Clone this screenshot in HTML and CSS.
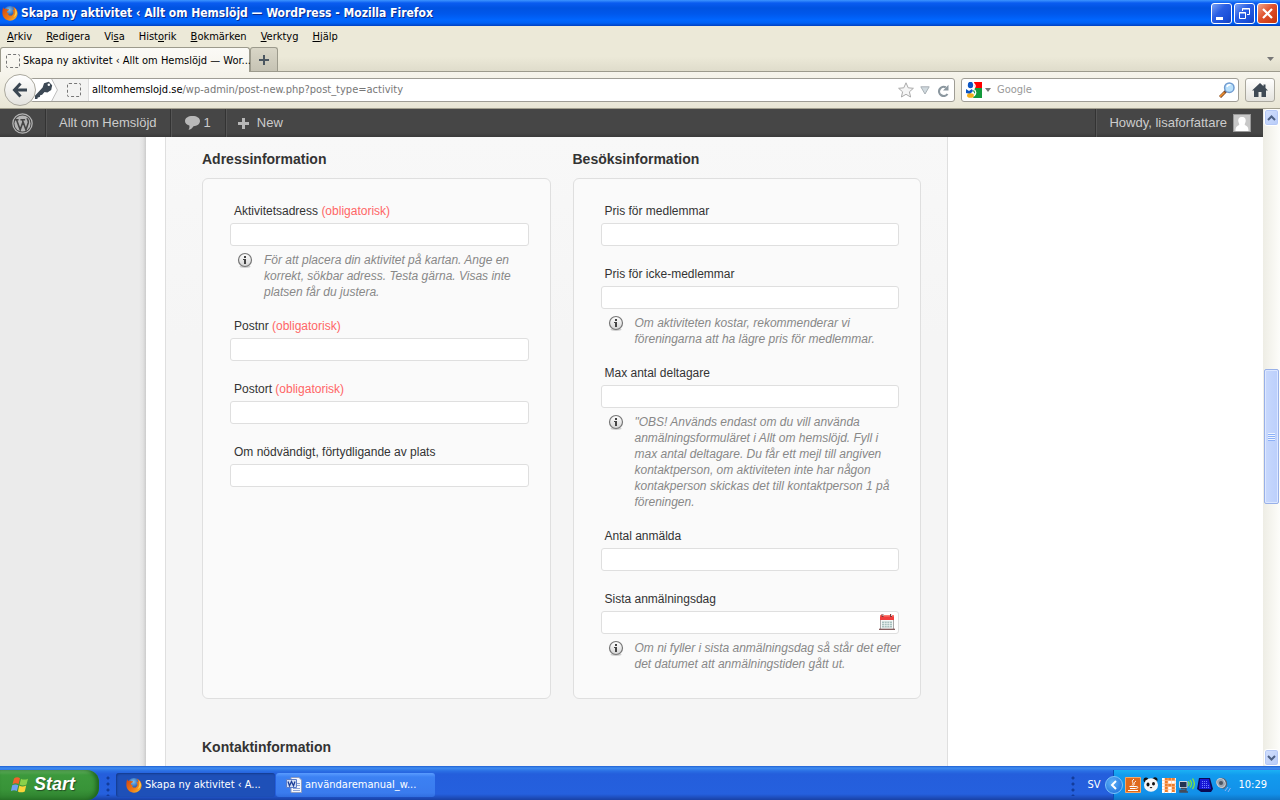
FILE: index.html
```html
<!DOCTYPE html>
<html lang="sv">
<head>
<meta charset="utf-8">
<title>Skapa ny aktivitet ‹ Allt om Hemslöjd — WordPress</title>
<link rel="stylesheet" href="styles.css">
</head>
<body>
<svg class="defs" aria-hidden="true">
  <defs>
    <radialGradient id="globe" cx=".45" cy=".3" r=".7"><stop offset="0" stop-color="#7cc4f0"/><stop offset=".6" stop-color="#2a5fb4"/><stop offset="1" stop-color="#162a6a"/></radialGradient>
    <linearGradient id="fox" x1="0" y1="0" x2="1" y2="1"><stop offset="0" stop-color="#d2420c"/><stop offset=".6" stop-color="#ee7a17"/><stop offset="1" stop-color="#fdc52f"/></linearGradient>
    <linearGradient id="infobg" x1="0" y1="0" x2="0" y2="1"><stop offset="0" stop-color="#fff"/><stop offset="1" stop-color="#d4d4d4"/></linearGradient>
    <symbol id="firefox" viewBox="0 0 16 16">
      <circle cx="8" cy="7.500" r="6.600" fill="url(#globe)"/>
      <path d="M1.200 2.200 2 4 3.600 3.400 5.200 4.200 7.200 4.300 6.300 5.600 4.900 6.200 5 7.700 6.800 8 6 9.200 7.200 10.600 9.800 10.400 11.400 8.600 11.300 6.400 10.200 4.400 12 5.300 11.900 3.200 10.600 1.400C13.800 2.600 15.800 5.400 15.600 8.800 15.200 13 12 15.700 8 15.700 3.800 15.700.6 12.600.4 8.600.3 6.200.6 3.800 1.200 2.200Z" fill="url(#fox)"/>
      <path d="M12.400 3.200C14 5.500 13.600 10 11.200 12 13.600 11.600 15 9.600 15 7.800 14.800 5.800 13.800 4.200 12.400 3.200Z" fill="#fcd04a"/>
    </symbol>
    <symbol id="info" viewBox="0 0 16 18">
      <ellipse cx="8" cy="14.600" rx="5.500" ry="1.400" fill="#bbb" opacity=".7"/>
      <circle cx="8" cy="8" r="6.500" fill="url(#infobg)" stroke="#777" stroke-width="1.200"/>
      <path d="M7 4h2v2H7zM6 7h3v5H7V8H6z" fill="#444"/>
    </symbol>
  </defs>
</svg>

<header class="titlebar">
  <svg class="icon16" aria-hidden="true"><use href="#firefox"/></svg>
  <h1 class="titlebar-text">Skapa ny aktivitet ‹ Allt om Hemslöjd — WordPress - Mozilla Firefox</h1>
  <div class="window-buttons">
    <button class="winbtn" aria-label="Minimera"><svg viewBox="0 0 19 19"><path d="M4 13h7v3H4z" fill="#fff"/></svg></button>
    <button class="winbtn" aria-label="Återställ"><svg viewBox="0 0 19 19" fill="none" stroke="#fff"><path d="M7.500 7V4.500h7v6H12M7 5h8"/><path d="M4.500 8.500h6v6h-6zM4 9h7"/></svg></button>
    <button class="winbtn winbtn-close" aria-label="Stäng"><svg viewBox="0 0 19 19"><path d="m5 5 9 9m0-9-9 9" stroke="#fff" stroke-width="2.200"/></svg></button>
  </div>
</header>

<nav class="menubar" aria-label="Meny">
  <button><u>A</u>rkiv</button><button><u>R</u>edigera</button><button>Vi<u>s</u>a</button><button>Hist<u>o</u>rik</button><button><u>B</u>okmärken</button><button><u>V</u>erktyg</button><button><u>H</u>jälp</button>
</nav>

<div class="tabstrip">
  <button class="tab"><span class="blank-page"></span><span>Skapa ny aktivitet ‹ Allt om Hemslöjd — Wor...</span></button>
  <button class="newtab" aria-label="Ny flik"><svg viewBox="0 0 12 12"><path d="M6 1v10M1 6h10" stroke="#4b5660" stroke-width="2"/></svg></button>
  <button class="tablist" aria-label="Alla flikar"><svg viewBox="0 0 7 4"><path d="M0 0h7L3.500 4z" fill="#777"/></svg></button>
</div>

<div class="toolbar">
  <button class="back" aria-label="Bakåt"><svg viewBox="0 0 18 18"><path d="M9.500 2.500 3.500 9l6 6.500M4 9h12" fill="none" stroke="#3a4652" stroke-width="3"/></svg></button>
  <div class="urlbar">
    <div class="identity">
      <svg class="key" viewBox="0 0 28 23"><path d="M0 0h21l6 11.500L21 23H0z" fill="#fff"/><path d="m21 0 6 11.500L21 23" fill="none" stroke="#bbb"/><path d="M13 4.500 18 3l3.500 3.500-1 5-4 2.500-3-.5-2.500 3-2 .4-.4 2-2.200.4-.4 1.700H3.500v-3.500L11.500 9z" fill="#3d4955"/><circle cx="18" cy="6" r="1.300" fill="#fff"/></svg>
      <span class="blank-page"></span>
    </div>
    <div class="address" role="textbox" aria-label="Adress" tabindex="0"><b>alltomhemslojd.se</b>/wp-admin/post-new.php?post_type=activity</div>
    <svg class="star" viewBox="0 0 16 16"><path d="m8 .8 2.200 5 5.200.5-4 3.500 1.200 5.200L8 12.300 3.400 15l1.200-5.200-4-3.500 5.200-.5z" fill="#f5f5f5" stroke="#aaa"/></svg>
    <svg class="drop" viewBox="0 0 10 9"><path d="M.8.8h8.400L5 8z" fill="#d0d9de" stroke="#a8b0b5"/></svg>
    <svg class="reload" viewBox="0 0 12 13"><path d="M10.500 10A4.600 4.600 0 1 1 8.800 3.300" fill="none" stroke="#8b979f" stroke-width="2.200"/><path d="M11.500.8v5.700H6z" fill="#8b979f"/></svg>
  </div>
  <div class="searchbar">
    <svg class="icon16" viewBox="0 0 16 16"><path d="M0 0h16v16H0z" fill="#fff"/><path d="M8 0h8v6H9z" fill="#f00"/><path d="M9 6h7v10H7l2-4-2-3z" fill="#149a3c"/><ellipse cx="4.500" cy="3" rx="2.700" ry="3.200" fill="#0b55c4"/><path d="m0 7 3 2 3-2 1 2-3 3-4-1z" fill="#0b55c4"/><ellipse cx="4.500" cy="13.500" rx="3.500" ry="2.300" fill="#f4ae1c"/><path d="M7 1c3 2 3 4 0 6 4 2 3 5 1 7" fill="none" stroke="#fff" stroke-width="1.300"/></svg>
    <svg class="caret" viewBox="0 0 6 4"><path d="M0 0h6L3 4z" fill="#777"/></svg>
    <input class="search" type="text" placeholder="Google" aria-label="Sök">
    <svg class="icon16" viewBox="0 0 16 16"><path d="m7 9-6 6" stroke="#7a4a2a" stroke-width="3"/><path d="m5.500 10.500-4.500 4.200" stroke="#f09030" stroke-width="1.700"/><circle cx="10.300" cy="5.700" r="4.700" fill="#b9e0fb" stroke="#6f9bd0" stroke-width="1.500"/><path d="M8 5c.5-2 2-2.400 3.500-2.200" stroke="#fff" stroke-width="1.500" fill="none"/></svg>
  </div>
  <button class="home" aria-label="Startsida"><svg viewBox="0 0 16 14"><path d="M8 0 0 7.500h2V14h4.500V9h3v5H14V7.500h2l-2.500-2.400V1.500h-2v1.700z" fill="#3f4a55"/></svg></button>
</div>

<div class="viewport">
  <div class="page">
    <nav class="adminbar" aria-label="Verktygsfält">
      <a class="ab-item ab-logo" href="#" aria-label="WordPress"><svg viewBox="0 0 20 20"><circle cx="10" cy="10" r="9.200" fill="none" stroke="#b4b4b4" stroke-width="1.200"/><circle cx="10" cy="10" r="7.700" fill="#b4b4b4"/><path d="M2.500 6.500h3.800M8 6.500h4.500M4.300 6.500 7.800 16l2.600-7.500M9.800 6.500 13.300 16l2.200-6.800c.5-2-.9-2.900-1.100-4.200" fill="none" stroke="#464646" stroke-width="1.500"/></svg></a>
      <a class="ab-item ab-site" href="#">Allt om Hemslöjd</a>
      <a class="ab-item ab-comments" href="#"><svg viewBox="0 0 15 14"><path d="M7.500 0C12 0 15 2 15 5s-3 5.200-6.500 5.200C7.500 12 5.500 13.700 3.500 13.700 4.500 12.500 4.600 11 4.300 9.600 1.500 8.700 0 7 0 5c0-3 3-5 7.500-5z" fill="#b8b8b8"/></svg>1</a>
      <a class="ab-item ab-new" href="#"><svg viewBox="0 0 11 11"><path d="M5.500 0v11M0 5.500h11" stroke="#b8b8b8" stroke-width="3"/></svg>New</a>
      <a class="ab-item ab-user" href="#">Howdy, lisaforfattare<svg viewBox="0 0 18 18"><path d="M0 0h18v18H0z" fill="#999"/><path d="M1 1h16v16H1z" fill="#c8c8c8"/><path d="M9 3c3 0 4 2 3.700 4.300-.2 1.600-1 2.200-1 3.500 1.300 1.200 3.800 1.200 3.800 6.200h-13c0-5 2.500-5 3.800-6.200 0-1.300-.8-1.900-1-3.500C5 5 6 3 9 3z" fill="#fff"/></svg></a>
    </nav>
    <div class="columns">
      <div class="adminmenu"></div>
      <main class="panel">
        <form class="sections">
          <section class="section">
            <h2>Adressinformation</h2>
            <div class="card">
              <div class="field"><label for="adress">Aktivitetsadress <em>(obligatorisk)</em></label><input id="adress" type="text">
                <p class="help"><svg aria-hidden="true"><use href="#info"/></svg><span>För att placera din aktivitet på kartan. Ange en<br>korrekt, sökbar adress. Testa gärna. Visas inte<br>platsen får du justera.</span></p></div>
              <div class="field"><label for="postnr">Postnr <em>(obligatorisk)</em></label><input id="postnr" type="text"></div>
              <div class="field"><label for="postort">Postort <em>(obligatorisk)</em></label><input id="postort" type="text"></div>
              <div class="field"><label for="plats">Om nödvändigt, förtydligande av plats</label><input id="plats" type="text"></div>
            </div>
          </section>
          <section class="section">
            <h2>Besöksinformation</h2>
            <div class="card">
              <div class="field"><label for="pris">Pris för medlemmar</label><input id="pris" type="text"></div>
              <div class="field"><label for="pris2">Pris för icke-medlemmar</label><input id="pris2" type="text">
                <p class="help"><svg aria-hidden="true"><use href="#info"/></svg><span>Om aktiviteten kostar, rekommenderar vi<br>föreningarna att ha lägre pris för medlemmar.</span></p></div>
              <div class="field"><label for="max">Max antal deltagare</label><input id="max" type="text">
                <p class="help"><svg aria-hidden="true"><use href="#info"/></svg><span>"OBS! Används endast om du vill använda<br>anmälningsformuläret i Allt om hemslöjd. Fyll i<br>max antal deltagare. Du får ett mejl till angiven<br>kontaktperson, om aktiviteten inte har någon<br>kontakperson skickas det till kontaktperson 1 på<br>föreningen.</span></p></div>
              <div class="field"><label for="antal">Antal anmälda</label><input id="antal" type="text"></div>
              <div class="field"><label for="sista">Sista anmälningsdag</label>
                <div class="datebox"><input id="sista" type="text"><svg viewBox="0 0 16 16" aria-hidden="true"><path d="M1 2h14v13H1z" fill="#f4f8f7"/><path d="M1 1h14v5H1z" fill="#f03c3c"/><path d="M1 1h14v1.500H1z" fill="#ff7a70"/><path d="M3.500 0v3M12 0v3" stroke="#833" stroke-width="2"/><path d="M4 0v2M12.500 0v2" stroke="#ddd"/><path d="M3 7.500h10v6H3z" fill="#a9c0be"/><path d="M3 9.500h10M3 11.500h10M5.500 7.500v6M8 7.500v6M10.500 7.500v6" stroke="#f4f8f7" stroke-width=".6"/><path d="M1.500 6v9M14.500 6v9" stroke="#aaa"/><path d="M0 15.300h16" stroke="#7b4b4b" stroke-width="1.200"/></svg></div>
                <p class="help"><svg aria-hidden="true"><use href="#info"/></svg><span>Om ni fyller i sista anmälningsdag så står det efter<br>det datumet att anmälningstiden gått ut.</span></p></div>
            </div>
          </section>
          <section class="section section-contact"><h2>Kontaktinformation</h2></section>
        </form>
      </main>
      <aside class="side"></aside>
    </div>
  </div>
  <div class="scrollbar">
    <button class="sb-arrow" aria-label="Rulla upp"><svg viewBox="0 0 9 6"><path d="m1 5 3.500-3.500L8 5" fill="none" stroke="#4d6185" stroke-width="2"/></svg></button>
    <div class="sb-space-top"></div>
    <div class="sb-thumb"><i></i></div>
    <div class="sb-space-bottom"></div>
    <button class="sb-arrow" aria-label="Rulla ned"><svg viewBox="0 0 9 6"><path d="m1 1 3.500 3.500L8 1" fill="none" stroke="#4d6185" stroke-width="2"/></svg></button>
  </div>
</div>

<footer class="taskbar">
  <button class="start"><svg viewBox="0 0 18 17"><path d="M3 2.500C5 1 7 1 9 2.200L7.600 8C5.600 7 3.600 7 1.500 8.200z" fill="#f0622d"/><path d="M10 2.700c2 1.200 4.300 1.200 7 0L15.500 8.500c-2.500 1.300-5 1.200-6.900 0z" fill="#8ad14a"/><path d="M1.200 9.300c2-1.200 4.200-1.200 6.100-.1L5.900 15c-2-1.100-4-1-6 .1z" fill="#6fa0f4"/><path d="M8.300 9.600c2 1.200 4.300 1.300 6.900 0L13.800 15.400c-2.500 1.300-5 1.200-6.900 0z" fill="#fbd43a"/></svg><span>Start</span></button>
  <span class="grip"></span>
  <button class="task task-active"><svg class="icon16" aria-hidden="true"><use href="#firefox"/></svg><span>Skapa ny aktivitet ‹ A...</span></button>
  <button class="task"><svg class="icon16" viewBox="0 0 16 16"><path d="M5 .5h8l2.500 2.500v12.500H5z" fill="#f4f6fc" stroke="#8e9cc0"/><path d="M11 6.500h3M11 8.500h3M7 11.500h7M7 13.500h7" stroke="#8da4d8"/><path d="M.5 2.500h10v8H.5z" fill="#d3def6" stroke="#5b7cc8"/><path d="m2 4.500 1.500 4.300 2-4.300 2 4.300L9 4.500" fill="none" stroke="#1d3f98" stroke-width="1.300"/></svg><span>användaremanual_w...</span></button>
  <span class="grip grip-right"></span>
  <span class="lang">SV</span>
  <div class="tray">
    <button class="tray-toggle" aria-label="Visa dolda ikoner"><svg viewBox="0 0 8 10"><path d="M6 1 2 5l4 4" fill="none" stroke="#fff" stroke-width="2"/></svg></button>
    <svg class="icon16" viewBox="0 0 16 16"><path d="M.5.5h15v15H.5z" fill="#df6a1c" stroke="#f7a764"/><path d="M9 2C5 5 10 5.500 7 8.500M11 4C8 6 10 7 8.500 8.500M4.500 9.500h6.500M5 11.500h5.500M11 9.500c3 0 2 2-.5 2M3 13.500h10" fill="none" stroke="#fff"/></svg>
    <svg class="icon16" viewBox="0 0 16 16"><circle cx="3" cy="3" r="2.500" fill="#111"/><circle cx="12" cy="2.700" r="2.500" fill="#111"/><ellipse cx="8" cy="8" rx="7" ry="6.700" fill="#f6f6f6"/><ellipse cx="5" cy="7.500" rx="1.500" ry="2" fill="#111"/><ellipse cx="10.500" cy="6.800" rx="1.500" ry="1.800" fill="#111"/><path d="M6.500 10h3L8 11.500z" fill="#111"/></svg>
    <svg class="icon16" viewBox="0 0 16 16"><path d="M1 1h14v15H1z" fill="#fff"/><path d="M4 1h10v3H4zM4 4h3v11H4zM7 7h7v3H7zM11 10h3v5h-3z" fill="#ef7d2a"/><path d="M1 3.500h14M1 6.500h14M1 9.500h14M1 12.500h14M3.500 1v15M7 1v15M10.500 1v15M14 1v15" stroke="#ffc59c" stroke-width=".6"/></svg>
    <svg class="icon16" viewBox="0 0 16 16"><path d="M.5 4.500h7.500v6H.5z" fill="#223352" stroke="#cdd3de"/><path d="M2 11.500h5v2H1v1.500h8" fill="none" stroke="#444b5a" stroke-width="1.400"/><path d="M9 4.500c1.500 1.500 1.500 3 0 4.500M11 3c2 2.500 2 5 0 7.500M13.500 1.500c2.500 3.500 2.500 7 0 10.500" fill="none" stroke="#7be048" stroke-width="1.300"/></svg>
    <svg class="icon16" viewBox="0 0 16 16"><path d="M2 1h11l3 11-2 3H4L0 12z" fill="#0a0a54"/><path d="M3 2h9l2 10H2z" fill="#1717d4"/><path d="M5 4.500h6M5 6.500h6M5 8.500h7M5 10.500h7" stroke="#6f7fff" stroke-dasharray="1 1"/></svg>
    <svg class="icon16" viewBox="0 0 16 16"><path d="M5 1c5-1 8 3 7 8l-3 3C4 11 1 8 1 4z" fill="#596474"/><ellipse cx="6" cy="6" rx="4" ry="4.700" transform="rotate(-35 6 6)" fill="#9aa4b0" stroke="#d4dae2"/><circle cx="6" cy="6" r="2" fill="#4a5563"/><path d="m10 14 3-4m0 5 2.500-4" stroke="#8fb4f4"/></svg>
    <time>10:29</time>
  </div>
</footer>
</body>
</html>
```
FILE: styles.css
```css
* { box-sizing: border-box; }
body {
  margin: 0;
  height: 100vh;
  display: flex;
  flex-direction: column;
  overflow: hidden;
  font: 11px/14px "DejaVu Sans Condensed", "DejaVu Sans", sans-serif;
  color: #000;
  background: #ece9d8;
}
button { font: inherit; color: inherit; border: 0; padding: 0; background: none; }
svg { display: block; flex: none; }
.defs { position: absolute; width: 0; height: 0; }
.icon16 { width: 16px; height: 16px; }

.titlebar {
  flex: none;
  height: 26px;
  display: flex;
  align-items: center;
  gap: 3px;
  padding: 0 2px;
  background: linear-gradient(#3d95ff 0, #0a5cf0 3px, #0053e1 8px, #0058ec 14px, #0066ff 20px, #0061f5 23px, #0040c0 26px);
}
.titlebar-text {
  margin: 0;
  flex: 1;
  color: #fff;
  font: bold 12px/16px "DejaVu Sans Condensed", "DejaVu Sans", sans-serif;
  text-shadow: 1px 1px 0 #0a2a8c;
  white-space: nowrap;
}
.window-buttons { display: flex; gap: 2px; }
.winbtn {
  width: 21px;
  height: 21px;
  border: 1px solid #fff;
  border-radius: 3px;
  background: linear-gradient(135deg, #7ba2f4, #2a5fe4 40%, #1b50d8 75%, #1740bc);
}
.winbtn-close { background: linear-gradient(135deg, #f0a58c, #e0512c 45%, #c4330c); }

.menubar { flex: none; height: 21px; display: flex; align-items: center; gap: 14px; padding: 0 7px; }
.menubar u { text-underline-offset: 1px; }

.tabstrip {
  flex: none;
  height: 25px;
  display: flex;
  align-items: stretch;
  background: linear-gradient(#ece9d8 40%, #dfdccb);
  border-bottom: 1px solid #9c9a8c;
}
.tab {
  display: flex;
  align-items: center;
  gap: 3px;
  width: 250px;
  margin-bottom: -1px;
  padding: 2px 0 0 5px;
  border: 1px solid #9c9a8c;
  border-bottom: 0;
  border-radius: 3px 3px 0 0;
  background: linear-gradient(#fbfaf6, #f6f4ec);
  white-space: nowrap;
}
.blank-page { flex: none; width: 14px; height: 14px; border: 1px dashed #777; border-radius: 2px; }
.newtab {
  display: grid;
  place-items: center;
  width: 28px;
  border: 1px solid #9c9a8c;
  border-bottom: 0;
  border-radius: 3px 3px 0 0;
  background: linear-gradient(#d9d6c7, #c6c3b4);
}
.newtab svg { width: 12px; height: 12px; }
.tablist { margin-left: auto; padding: 0 6px; }
.tablist svg { width: 7px; height: 4px; }

.toolbar {
  flex: none;
  height: 37px;
  display: flex;
  align-items: center;
  padding: 0 5px 0 4px;
  background: linear-gradient(#f6f4ec, #e9e6d5);
  border-bottom: 1px solid #a3a08f;
}
.back {
  z-index: 1;
  flex: none;
  display: grid;
  place-items: center;
  width: 32px;
  height: 32px;
  border: 1px solid #aaa89e;
  border-radius: 50%;
  background: linear-gradient(#fff, #e4e3de);
}
.back svg { width: 18px; height: 18px; }
.urlbar {
  flex: 1;
  display: flex;
  align-items: center;
  height: 24px;
  margin-left: -6px;
  padding-right: 5px;
  border: 1px solid #9f9d95;
  border-radius: 3px;
  background: #fff;
}
.identity {
  display: flex;
  align-items: center;
  gap: 8px;
  height: 22px;
  padding-right: 7px;
  margin-right: 3px;
  border-right: 1px solid #ddd;
  background: #f3f3f2;
}
.key { width: 28px; height: 22px; }
.address { flex: 1; color: #777; white-space: nowrap; }
.address b { font-weight: normal; color: #000; }
.star { width: 16px; height: 16px; }
.drop { width: 10px; height: 9px; margin-left: 6px; }
.reload { width: 12px; height: 13px; margin-left: 7px; }
.searchbar {
  display: flex;
  align-items: center;
  width: 278px;
  height: 24px;
  margin-left: 6px;
  padding: 0 3px 0 4px;
  border: 1px solid #9f9d95;
  border-radius: 3px;
  background: #fff;
}
.caret { width: 6px; height: 4px; margin: 0 6px 0 3px; }
.search { flex: 1; min-width: 0; padding: 0; border: 0; background: none; font: inherit; }
.search::placeholder { color: #999; opacity: 1; }
.home {
  display: grid;
  place-items: center;
  width: 30px;
  height: 24px;
  margin-left: 6px;
  border: 1px solid #aaa89e;
  border-radius: 3px;
  background: linear-gradient(#fff, #e4e3de);
}
.home svg { width: 16px; height: 14px; }

.viewport { flex: 1; min-height: 0; display: flex; background: #fff; }
.page { flex: 1; min-width: 0; display: flex; flex-direction: column; overflow: hidden; }
.adminbar {
  flex: none;
  height: 28px;
  display: flex;
  background: linear-gradient(#464646 24px, #3a3a3a);
  font: 13px/28px "Liberation Sans", Arial, sans-serif;
}
.ab-item {
  display: flex;
  align-items: center;
  gap: 6px;
  padding: 0 12px;
  border-right: 1px solid #333;
  box-shadow: 1px 0 0 #555;
  color: #ccc;
  text-decoration: none;
  white-space: nowrap;
}
.ab-logo svg { width: 21px; height: 21px; }
.ab-site { padding: 0 13px; }
.ab-comments { gap: 4px; padding: 0 14px; }
.ab-comments svg { width: 15px; height: 14px; }
.ab-new { gap: 8px; border-right: 0; box-shadow: none; }
.ab-new svg { width: 11px; height: 11px; }
.ab-user { margin-left: auto; border-right: 0; border-left: 1px solid #555; box-shadow: -1px 0 0 #333; }
.ab-user svg { width: 18px; height: 18px; }

.columns { flex: 1; min-height: 0; display: flex; font: 12px/16px "Liberation Sans", Arial, sans-serif; color: #333; }
.adminmenu { flex: none; width: 146px; background: linear-gradient(to left, #ccc, #e2e2e2 3px, #ebebeb 7px); }
.panel {
  flex: 1;
  min-width: 0;
  margin-left: 19px;
  padding: 14px 26px 0 36px;
  border: 1px solid #dfdfdf;
  border-width: 0 1px;
  background: linear-gradient(#f8f8f8, #f5f5f5 200px);
}
.side { flex: none; width: 315px; }
.sections { display: grid; grid-template-columns: 1fr 1fr; column-gap: 22px; row-gap: 40px; }
.section { display: flex; flex-direction: column; min-width: 0; }
.section h2 { margin: 0 0 11px; font-size: 14px; line-height: 16px; }
.card {
  flex: 1;
  display: flex;
  flex-direction: column;
  gap: 20px;
  padding: 24px 21px 28px 27px;
  border: 1px solid #dfdfdf;
  border-radius: 6px;
  background: #fafafa;
}
.field { display: flex; flex-direction: column; }
.field label { padding: 0 4px; margin-bottom: 4px; }
.field em { font-style: normal; color: #f66; }
.field input {
  width: 100%;
  height: 23px;
  padding: 2px 4px;
  border: 1px solid #dfdfdf;
  border-radius: 3px;
  background: #fff;
  font: inherit;
}
.datebox { position: relative; }
.datebox svg { position: absolute; right: 4px; top: 3px; width: 16px; height: 16px; }
.help { display: flex; gap: 11px; margin: 6px 0 -2px 7px; font-style: italic; color: #888; white-space: nowrap; }
.help svg { width: 16px; height: 18px; }

.scrollbar {
  flex: none;
  width: 17px;
  display: flex;
  flex-direction: column;
  padding: 0 1px;
  background: linear-gradient(to right, #eeede5, #fdfdfa);
}
.sb-arrow {
  flex: none;
  display: grid;
  place-items: center;
  height: 17px;
  border: 1px solid #fff;
  border-radius: 3px;
  background: linear-gradient(135deg, #d3e0fd, #b7cbf8);
  box-shadow: inset 0 0 0 1px #b4c8f6;
}
.sb-arrow svg { width: 9px; height: 6px; }
.sb-space-top { flex: 244; }
.sb-space-bottom { flex: 246; }
.sb-thumb {
  flex: 133;
  display: grid;
  place-items: center;
  border: 1px solid #98b0e8;
  border-radius: 2px;
  background: linear-gradient(to right, #c8d8fc, #bbcffc);
  box-shadow: inset 0 0 0 1px #dce7ff;
}
.sb-thumb i { width: 7px; height: 8px; background: repeating-linear-gradient(#eef4fe 0 1px, #8cb0f8 1px 2px); }

.taskbar {
  flex: none;
  height: 34px;
  display: flex;
  align-items: stretch;
  color: #fff;
  background: linear-gradient(#1f5fd2 0, #3f8cf0 2px, #2a6fe4 5px, #245edc 8px, #2560de 28px, #1941a5 34px);
}
.start {
  display: flex;
  align-items: center;
  gap: 5px;
  width: 99px;
  margin-top: 4px;
  padding: 0 0 2px 11px;
  border-radius: 0 12px 12px 0;
  background: linear-gradient(#6cb868 0, #3c993c 5px, #389338 20px, #2d7d2d);
  box-shadow: inset -3px 0 4px #1f641f;
  font: italic bold 18px/24px "Liberation Sans", Arial, sans-serif;
  text-shadow: 1px 1px 1px #234f23;
}
.start svg { width: 18px; height: 17px; }
.grip { width: 6px; margin: 10px 4px 4px 7px; background: radial-gradient(circle at 2px 2px, #123c9c 1px, transparent 2px) 0 0 / 6px 6px; }
.task {
  display: flex;
  align-items: center;
  gap: 3px;
  width: 159px;
  margin: 7px 1px 3px 0;
  padding: 0 10px;
  border-radius: 3px;
  background: linear-gradient(#5a9cff, #3c81f3 4px, #3a7bee 20px, #306ee0);
  white-space: nowrap;
}
.task-active { background: #1e50b8; box-shadow: inset 1px 1px 2px #143a8c; }
.grip-right { margin-left: auto; margin-right: 8px; }
.lang { align-self: center; padding: 4px 2px 0; }
.tray {
  display: flex;
  align-items: center;
  gap: 2px;
  margin: 4px 0 0 11px;
  padding-right: 13px;
  border-left: 1px solid #0c4fb4;
  background: linear-gradient(#1bb2f4, #129bee 5px, #1290e9 24px, #0f74c4);
}
.tray-toggle {
  display: grid;
  place-items: center;
  width: 18px;
  height: 18px;
  margin-left: -9px;
  border: 1px solid #7cc4fb;
  border-radius: 50%;
  background: radial-gradient(circle at 40% 35%, #5eb2f8, #1467d8);
}
.tray-toggle svg { width: 8px; height: 10px; }
.tray time { margin-left: 5px; }
```
